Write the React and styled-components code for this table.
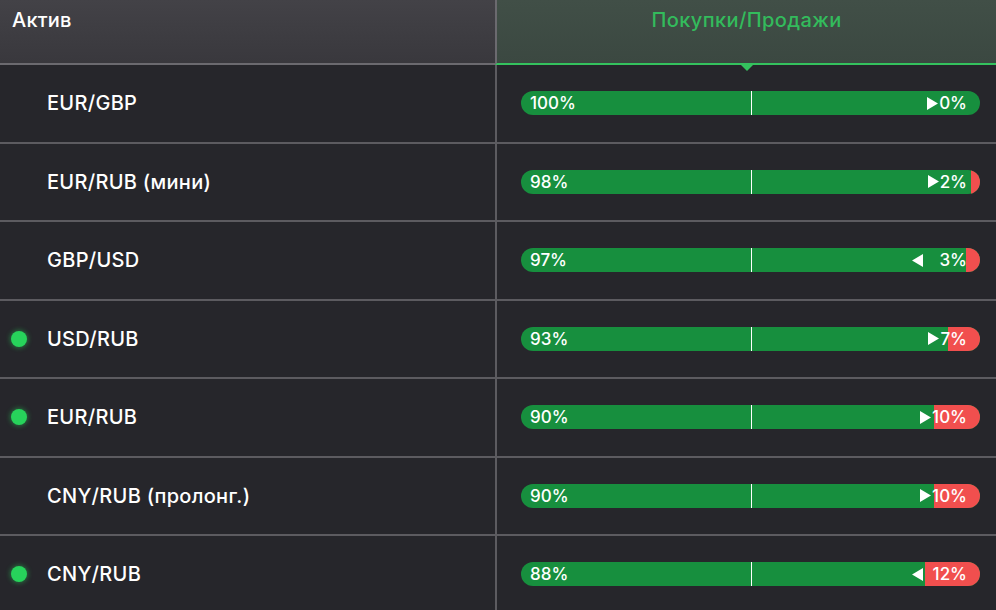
import styled, { createGlobalStyle } from "styled-components";

const GlobalStyle = createGlobalStyle`
  html, body {
    margin: 0;
    padding: 0;
    background: #26262b;
    overflow: hidden;
  }
  body {
    font-family: Inter, "Noto Sans", "Liberation Sans", sans-serif;
    -webkit-font-smoothing: antialiased;
  }
`;

const rows = [
  { name: "EUR/GBP", buy: 100, sell: 0, dir: "up", live: false },
  { name: "EUR/RUB (мини)", buy: 98, sell: 2, dir: "up", live: false },
  { name: "GBP/USD", buy: 97, sell: 3, dir: "down", live: false },
  { name: "USD/RUB", buy: 93, sell: 7, dir: "up", live: true },
  { name: "EUR/RUB", buy: 90, sell: 10, dir: "up", live: true },
  { name: "CNY/RUB (пролонг.)", buy: 90, sell: 10, dir: "up", live: false },
  { name: "CNY/RUB", buy: 88, sell: 12, dir: "down", live: true },
];

// Styles
const Table = styled.div`
  display: grid;
  grid-template-columns: 495px 1fr;
  width: 996px;
  height: 610px;
  overflow: hidden;
  align-content: start;
`;

const HeadCell = styled.div`
  height: 65px;
  display: flex;
  align-items: flex-start;
  padding-top: 8px;
  box-sizing: border-box;
  position: relative;
  font-size: 20px;
  font-weight: 500;
  border-bottom: 2px solid ${(p) => (p.$active ? "#34c25e" : "#6b6a6f")};
  ${(p) =>
    p.$active
      ? `
    justify-content: center;
    color: #33bb5c;
    letter-spacing: 0.4px;
    background: linear-gradient(#414f47, #3b4841);
    border-left: 2px solid #6b6a6f;
  `
      : `
    padding-left: 12px;
    color: #ffffff;
    letter-spacing: 0.2px;
    background: linear-gradient(#434247, #39383d);
  `}
`;

const Pointer = styled.span`
  position: absolute;
  left: 50%;
  bottom: -8px;
  margin-left: -6px;
  width: 0;
  height: 0;
  border-left: 6px solid transparent;
  border-right: 6px solid transparent;
  border-top: 6px solid #34c25e;
`;

const NameCell = styled.div`
  height: 76.5px;
  display: flex;
  align-items: center;
  border-bottom: 2px solid #5c5b60;
  color: #ffffff;
  font-size: 20px;
  font-weight: 500;
  letter-spacing: 0.3px;
  padding-left: 11px;
  gap: 20px;
`;

const Dot = styled.span`
  width: 16px;
  height: 16px;
  border-radius: 50%;
  flex: none;
  background: ${(p) => (p.$on ? "#27d35b" : "transparent")};
  box-shadow: ${(p) => (p.$on ? "0 0 5px 1px rgba(39, 211, 91, 0.45)" : "none")};
`;

const BarCell = styled.div`
  height: 76.5px;
  display: flex;
  align-items: center;
  border-bottom: 2px solid #5c5b60;
  border-left: 2px solid #5c5b60;
  padding: 0 16px 0 24px;
`;

const Bar = styled.div`
  position: relative;
  flex: 1;
  height: 24px;
  border-radius: 12px;
  overflow: hidden;
  background: #178f3e;
  display: flex;
  align-items: center;
  justify-content: space-between;
  padding: 0 13px 0 9px;
  color: #ffffff;
  font-size: 17px;
  font-weight: 500;
`;

const Sell = styled.div`
  position: absolute;
  top: 0;
  right: 0;
  bottom: 0;
  background: #f14f4e;
`;

const Middle = styled.div`
  position: absolute;
  top: 0;
  bottom: 0;
  left: 50%;
  width: 1px;
  background: #ffffff;
`;

const Label = styled.span`
  position: relative;
  display: flex;
  align-items: center;
`;

const Value = styled.span`
  display: inline-block;
  text-align: right;
  min-width: ${(p) => (p.$wide ? "34px" : "0")};
  margin-left: ${(p) => (p.$wide ? "10px" : "1px")};
`;

const Arrow = ({ dir }) => (
  <svg width="11" height="13" viewBox="0 0 11 13">
    {dir === "up" ? (
      <path d="M0 0 L11 6.5 L0 13 Z" fill="#ffffff" />
    ) : (
      <path d="M11 0 L0 6.5 L11 13 Z" fill="#ffffff" />
    )}
  </svg>
);

const App = () => {
  return (
    <>
      <GlobalStyle />
      <Table>
        <HeadCell>Актив</HeadCell>
        <HeadCell $active>
          Покупки/Продажи
          <Pointer />
        </HeadCell>
        {rows.map((r) => (
          <>
            <NameCell key={r.name + "n"}>
              <Dot $on={r.live} />
              {r.name}
            </NameCell>
            <BarCell key={r.name + "b"}>
              <Bar>
                {r.sell > 0 && <Sell style={{ width: `${r.sell}%` }} />}
                <Middle />
                <Label>{r.buy}%</Label>
                <Label>
                  <Arrow dir={r.dir} />
                  <Value $wide={r.dir === "down"}>{r.sell}%</Value>
                </Label>
              </Bar>
            </BarCell>
          </>
        ))}
      </Table>
    </>
  );
};

export default App;
